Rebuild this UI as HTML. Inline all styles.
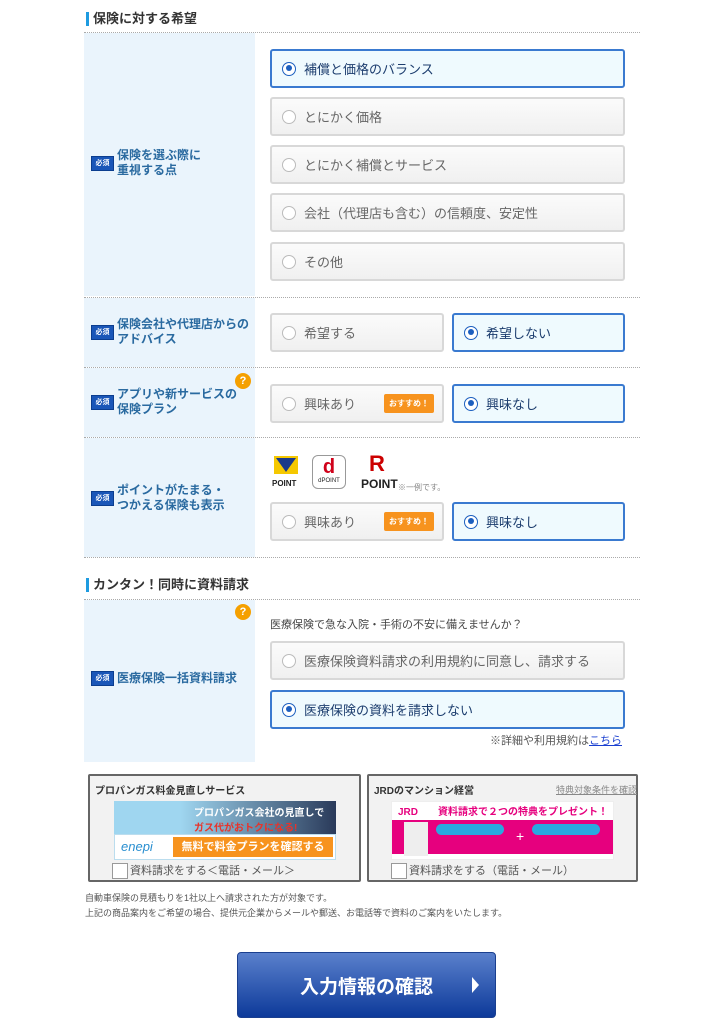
<!DOCTYPE html>
<html><head><meta charset="utf-8"><style>
*{box-sizing:border-box;margin:0;padding:0}
body{width:727px;height:1024px;background:#fff;position:relative;font-family:"Liberation Sans","Noto Sans CJK JP",sans-serif;color:#333;overflow:hidden}
.a{position:absolute}
.h{font-size:13px;font-weight:bold;color:#333;border-left:3px solid #1e9be0;padding-left:4px;line-height:14px}
.dl{height:0;border-top:1px dotted #aaa;left:84px;width:556px}
.lc{background:#eaf4fc;left:84px;width:171px}
.lab{left:91px;display:flex;align-items:center;font-size:12px;font-weight:bold;color:#2a6aa0;line-height:15px}
.bd{width:23px;height:15px;background:#1a56b8;color:#fff;font-size:7px;display:flex;align-items:center;justify-content:center;margin-right:3px;flex:none;border:1px solid #0b3d8f}
.o{border:2px solid #d8d8d8;border-radius:3px;background:linear-gradient(#fbfbfb,#f0f0f0);font-size:13px;color:#666;display:flex;align-items:center;padding-left:10px;height:39px}
.o.s{border:2px solid #3a7ad0;background:#effafe;color:#1c3d6e}
.r{width:14px;height:14px;border-radius:50%;border:1.5px solid #bbb;background:#fff;margin-right:8px;flex:none;position:relative}
.s .r{border-color:#1c5fbf}
.s .r:after{content:"";position:absolute;left:2.5px;top:2.5px;width:6px;height:6px;border-radius:50%;background:#1c5fbf}
.rec{position:absolute;right:8px;background:#f7931e;color:#fff;font-size:8px;font-weight:bold;border-radius:2px;padding:4px 5px}
.q{width:16px;height:16px;border-radius:50%;background:#f5a000;color:#fff;font-size:11px;font-weight:bold;display:flex;align-items:center;justify-content:center}
.pb{border:2px solid #666;background:#f2f2f2;border-radius:2px}
.cb{width:16px;height:16px;border:1px solid #999;background:#fff;display:inline-block;vertical-align:middle;margin-right:2px}
</style></head><body>
<div class="a h" style="left:86px;top:12px">保険に対する希望</div>
<div class="a dl" style="top:32px"></div>
<div class="a lc" style="top:33px;height:263px"></div>
<div class="a lab" style="top:148px"><span class="bd">必須</span><span>保険を選ぶ際に<br>重視する点</span></div>
<div class="a o s" style="left:270px;top:49px;width:355px">
<span class="r"></span>補償と価格のバランス</div>
<div class="a o" style="left:270px;top:97px;width:355px"><span class="r"></span>とにかく価格</div>
<div class="a o" style="left:270px;top:145px;width:355px"><span class="r"></span>とにかく補償とサービス</div>
<div class="a o" style="left:270px;top:193px;width:355px"><span class="r"></span>会社（代理店も含む）の信頼度、安定性</div>
<div class="a o" style="left:270px;top:242px;width:355px"><span class="r"></span>その他</div>
<div class="a dl" style="top:297px"></div>
<div class="a lc" style="top:298px;height:69px"></div>
<div class="a lab" style="top:317px"><span class="bd">必須</span><span>保険会社や代理店からの<br>アドバイス</span></div>
<div class="a o" style="left:270px;top:313px;width:174px"><span class="r"></span>希望する</div>
<div class="a o s" style="left:452px;top:313px;width:173px"><span class="r"></span>希望しない</div>
<div class="a dl" style="top:367px"></div>
<div class="a lc" style="top:368px;height:69px"></div>
<div class="a q" style="left:235px;top:373px">?</div>
<div class="a lab" style="top:387px"><span class="bd">必須</span><span>アプリや新サービスの<br>保険プラン</span></div>
<div class="a o" style="left:270px;top:384px;width:174px"><span class="r"></span>興味あり<span class="rec">おすすめ！</span></div>
<div class="a o s" style="left:452px;top:384px;width:173px"><span class="r"></span>興味なし</div>
<div class="a dl" style="top:437px"></div>
<div class="a lc" style="top:438px;height:119px"></div>
<div class="a lab" style="top:483px"><span class="bd">必須</span><span>ポイントがたまる・<br>つかえる保険も表示</span></div>
<div class="a" style="left:274px;top:456px;width:24px;height:18px;background:#f5c800"><div style="margin:2px auto 0;width:0;height:0;border-left:10px solid transparent;border-right:10px solid transparent;border-top:14px solid #1a3a8a"></div></div>
<div class="a" style="left:272px;top:479px;font-size:8px;font-weight:bold;color:#222">POINT</div>
<div class="a" style="left:312px;top:455px;width:34px;height:34px;border:1px solid #999;border-radius:6px;text-align:center"><div style="color:#d0021b;font-size:20px;font-weight:bold;line-height:22px">d</div><div style="font-size:6px;color:#222">dPOINT</div></div>
<div class="a" style="left:369px;top:452px;color:#c00;font-size:22px;font-weight:bold;line-height:24px">R</div>
<div class="a" style="left:361px;top:477px;font-size:12px;font-weight:bold;color:#222">POINT</div>
<div class="a" style="left:398px;top:482px;font-size:8px;color:#888">※一例です。</div>
<div class="a o" style="left:270px;top:502px;width:174px"><span class="r"></span>興味あり<span class="rec">おすすめ！</span></div>
<div class="a o s" style="left:452px;top:502px;width:173px"><span class="r"></span>興味なし</div>
<div class="a dl" style="top:557px"></div>
<div class="a h" style="left:86px;top:578px">カンタン！同時に資料請求</div>
<div class="a dl" style="top:599px"></div>
<div class="a lc" style="top:600px;height:162px"></div>
<div class="a q" style="left:235px;top:604px">?</div>
<div class="a lab" style="top:671px"><span class="bd">必須</span><span>医療保険一括資料請求</span></div>
<div class="a" style="left:270px;top:616px;font-size:11px;color:#444">医療保険で急な入院・手術の不安に備えませんか？</div>
<div class="a o" style="left:270px;top:641px;width:355px"><span class="r"></span>医療保険資料請求の利用規約に同意し、請求する</div>
<div class="a o s" style="left:270px;top:690px;width:355px"><span class="r"></span>医療保険の資料を請求しない</div>
<div class="a" style="left:490px;top:732px;font-size:11px;color:#555">※詳細や利用規約は<span style="color:#1a3fd0;text-decoration:underline">こちら</span></div>
<div class="a pb" style="left:88px;top:774px;width:273px;height:108px"></div>
<div class="a" style="left:95px;top:782px;font-size:10px;font-weight:bold;color:#333">プロパンガス料金見直しサービス</div>
<div class="a" style="left:114px;top:801px;width:222px;height:33px;background:linear-gradient(90deg,#9fd6f0 30%,#2a3a5a 100%);color:#fff;font-size:10px;font-weight:bold;padding:3px 0 0 80px">プロパンガス会社の見直しで<br><span style="color:#e8332a">ガス代がおトクになる!</span></div>
<div class="a" style="left:114px;top:834px;width:222px;height:26px;background:#fff;border:1px solid #bde"><span style="position:absolute;left:6px;top:4px;color:#2a8fd0;font-size:13px;font-style:italic">enepi</span><span style="position:absolute;left:58px;top:2px;width:160px;height:20px;background:#f7931e;color:#fff;font-size:11px;font-weight:bold;text-align:center;line-height:20px">無料で料金プランを確認する</span></div>
<div class="a" style="left:112px;top:862px;font-size:11px;color:#555"><span class="cb"></span>資料請求をする＜電話・メール＞</div>
<div class="a pb" style="left:367px;top:774px;width:271px;height:108px"></div>
<div class="a" style="left:374px;top:782px;font-size:10px;font-weight:bold;color:#333">JRDのマンション経営</div>
<div class="a" style="left:556px;top:783px;font-size:9px;color:#888;text-decoration:underline">特典対象条件を確認</div>
<div class="a" style="left:391px;top:801px;width:223px;height:59px;background:#fff;border:1px solid #eee"><div style="color:#e6007e;font-size:10px;font-weight:bold;padding:1px 0 0 6px">JRD　　資料請求で２つの特典をプレゼント！</div><div style="background:#e6007e;height:34px;margin-top:2px;position:relative"><span style="position:absolute;left:12px;top:2px;width:24px;height:34px;background:#eee"></span><span style="position:absolute;left:44px;top:4px;width:68px;height:11px;background:#29a8e0;border-radius:6px"></span><span style="position:absolute;left:124px;top:8px;color:#fff;font-size:14px">+</span><span style="position:absolute;left:140px;top:4px;width:68px;height:11px;background:#29a8e0;border-radius:6px"></span></div></div>
<div class="a" style="left:391px;top:862px;font-size:11px;color:#555"><span class="cb"></span>資料請求をする（電話・メール）</div>
<div class="a" style="left:85px;top:891px;font-size:9px;color:#555;line-height:15px">自動車保険の見積もりを1社以上へ請求された方が対象です。<br>上記の商品案内をご希望の場合、提供元企業からメールや郵送、お電話等で資料のご案内をいたします。</div>
<div class="a" style="left:237px;top:952px;width:259px;height:66px;border-radius:4px;background:linear-gradient(#5a80cc,#0d3a9a);border:1px solid #1a3f8f;color:#fff;font-size:19px;font-weight:bold;display:flex;align-items:center;justify-content:center">入力情報の確認<span style="position:absolute;right:16px;top:24px;border-left:7px solid #fff;border-top:8px solid transparent;border-bottom:8px solid transparent"></span></div>
</body></html>
